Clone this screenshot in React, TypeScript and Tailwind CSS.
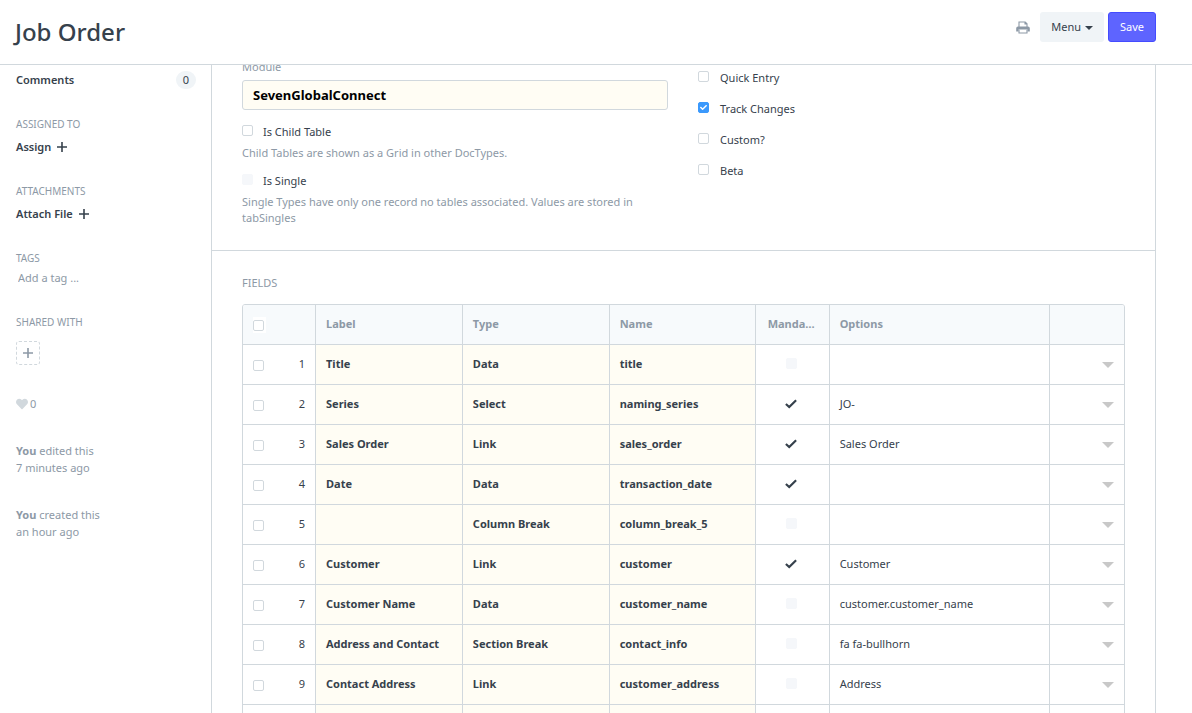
import React from "react";
import { FaCheck, FaHeart } from "react-icons/fa";

type Field = {
  label: string;
  type: string;
  name: string;
  mandatory: boolean;
  options: string;
};

const fields: Field[] = [
  { label: "Title", type: "Data", name: "title", mandatory: false, options: "" },
  { label: "Series", type: "Select", name: "naming_series", mandatory: true, options: "JO-" },
  { label: "Sales Order", type: "Link", name: "sales_order", mandatory: true, options: "Sales Order" },
  { label: "Date", type: "Data", name: "transaction_date", mandatory: true, options: "" },
  { label: "", type: "Column Break", name: "column_break_5", mandatory: false, options: "" },
  { label: "Customer", type: "Link", name: "customer", mandatory: true, options: "Customer" },
  { label: "Customer Name", type: "Data", name: "customer_name", mandatory: false, options: "customer.customer_name" },
  { label: "Address and Contact", type: "Section Break", name: "contact_info", mandatory: false, options: "fa fa-bullhorn" },
  { label: "Contact Address", type: "Link", name: "customer_address", mandatory: false, options: "Address" },
];

const flags = [
  { id: "quick-entry", label: "Quick Entry", checked: false },
  { id: "track-changes", label: "Track Changes", checked: true },
  { id: "custom", label: "Custom?", checked: false },
  { id: "beta", label: "Beta", checked: false },
];

function Tick({ className }: { className: string }) {
  return (
    <svg viewBox="0 0 12 10" className={className} fill="none" stroke="currentColor" strokeWidth="2.2" aria-hidden="true">
      <path d="M0.9 5 L4.2 8 L11.1 1.2" />
    </svg>
  );
}

function Plus({ className }: { className: string }) {
  return (
    <svg viewBox="0 0 10 10" className={className} fill="none" stroke="currentColor" aria-hidden="true">
      <path d="M5 0 V10 M0 5 H10" strokeWidth="1.6" />
    </svg>
  );
}

function Checkbox({ id, label, checked, disabled }: { id: string; label?: string; checked?: boolean; disabled?: boolean }) {
  return (
    <span className="relative block size-[11px] shrink-0">
      <input
        id={id}
        type="checkbox"
        aria-label={label}
        defaultChecked={checked}
        disabled={disabled}
        className="peer block size-[11px] appearance-none rounded-[2px] border border-[#d1d8dd] bg-white checked:border-[#3b99fc] checked:bg-[#3b99fc] disabled:border-[#f5f7fa] disabled:bg-[#f5f7fa]"
      />
      <FaCheck className="pointer-events-none absolute top-0.5 left-0.5 hidden size-[7px] text-white peer-checked:block" />
    </span>
  );
}

function SideHeading({ children }: { children: React.ReactNode }) {
  return <h2 className="text-[10px] leading-4 text-[#8d99a6] uppercase">{children}</h2>;
}

export default function App() {
  return (
    <div className="flex h-screen flex-col overflow-hidden bg-white font-['Noto_Sans','Open_Sans',sans-serif] text-[11px] leading-4 text-[#36414c]">
      <header className="z-10 flex h-[65px] shrink-0 items-start justify-between border-b border-[#d1d8dd] bg-white pr-9 pl-[15px]">
        <h1 className="pt-4 text-2xl font-medium">Job Order</h1>
        <div className="flex items-center pt-3">
          <button type="button" aria-label="Print" className="mr-2.5 text-[#8d99a6]">
            <svg viewBox="0 0 14 13" className="h-[13px] w-3.5" fill="none" stroke="currentColor" aria-hidden="true">
              <path d="M3 6 V1 H9.2 L11 2.8 V6 M9 1 V3 H11" strokeWidth="1.1" />
              <path d="M2 5.5 H12 Q13.8 5.5 13.8 7.3 V10.5 H11.5 V8.5 H2.5 V10.5 H0.2 V7.3 Q0.2 5.5 2 5.5 Z" fill="currentColor" stroke="none" />
              <path d="M3 8.8 V12 H11 V8.8" strokeWidth="1.1" />
            </svg>
          </button>
          <button type="button" className="flex h-[30px] items-center gap-1 rounded-[3px] bg-[#f0f4f7] px-[11px]">
            Menu
            <svg viewBox="0 0 8 4" className="mt-0.5 h-1 w-2" fill="currentColor" aria-hidden="true">
              <path d="M0 0 H8 L4 4 Z" />
            </svg>
          </button>
          <button type="button" className="ml-1 h-[30px] rounded-[3px] border border-[#444bff] bg-[#5e64ff] px-[11px] text-white">
            Save
          </button>
        </div>
      </header>

      <div className="flex min-h-0 grow pr-9">
        <aside className="w-[211px] shrink-0 pt-1.5 pr-[15px] pl-4">
          <div className="flex items-center justify-between font-semibold">
            <a href="#comments">Comments</a>
            <span className="rounded-full bg-[#f0f4f7] px-[7px] py-px font-normal">0</span>
          </div>

          <section className="mt-[27px]">
            <SideHeading>Assigned to</SideHeading>
            <button type="button" className="mt-[7px] flex items-center gap-1.5 font-semibold">
              Assign <Plus className="size-2.5" />
            </button>
          </section>

          <section className="mt-7">
            <SideHeading>Attachments</SideHeading>
            <button type="button" className="mt-[7px] flex items-center gap-1.5 font-semibold">
              Attach File <Plus className="size-2.5" />
            </button>
          </section>

          <section className="mt-7">
            <SideHeading>Tags</SideHeading>
            <input
              type="text"
              aria-label="Add a tag"
              placeholder="Add a tag ..."
              className="mt-1 block h-4 w-full px-0.5 outline-none placeholder:text-[#8d99a6]"
            />
          </section>

          <section className="mt-7">
            <SideHeading>Shared with</SideHeading>
            <button
              type="button"
              aria-label="Share"
              className="mt-[11px] flex size-6 items-center justify-center rounded-[3px] border border-dashed border-[#d1d8dd] text-[#8d99a6]"
            >
              <Plus className="size-2.5" />
            </button>
          </section>

          <button type="button" className="mt-[31px] flex items-center gap-0.5 text-[#8d99a6]">
            <FaHeart className="size-3 text-[#d1d8dd]" />0
          </button>

          <p className="mt-[30px] leading-[17px] text-[#8d99a6]">
            <b className="font-bold">You</b> edited this
            <br />7 minutes ago
          </p>
          <p className="mt-[30px] leading-[17px] text-[#8d99a6]">
            <b className="font-bold">You</b> created this
            <br />
            an hour ago
          </p>
        </aside>

        <main className="min-w-0 grow border-x border-[#d1d8dd]">
          <section className="grid grid-cols-2 gap-[30px] border-b border-[#d1d8dd] pr-[31px] pb-6 pl-[30px]">
            <div className="-mt-1.5">
              <label htmlFor="module" className="block text-[#8d99a6]">
                Module
              </label>
              <input
                id="module"
                type="text"
                defaultValue="SevenGlobalConnect"
                className="mt-[5px] block h-[30px] w-full rounded-[3px] border border-[#d1d8dd] bg-[#fffdf4] px-2.5 text-[13px] font-bold text-black outline-none"
              />
              <div className="mt-3.5 flex gap-2.5">
                <div className="pt-px">
                  <Checkbox id="is-child-table" />
                </div>
                <label htmlFor="is-child-table">Is Child Table</label>
              </div>
              <p className="mt-[5px] text-[#8d99a6]">Child Tables are shown as a Grid in other DocTypes.</p>
              <div className="mt-3 flex gap-2.5">
                <div className="pt-px">
                  <Checkbox id="is-single" disabled />
                </div>
                <label htmlFor="is-single">Is Single</label>
              </div>
              <p className="mt-[5px] text-[#8d99a6]">
                Single Types have only one record no tables associated. Values are stored in tabSingles
              </p>
            </div>
            <div className="flex flex-col gap-[15px] pt-[5px]">
              {flags.map((f) => (
                <div key={f.id} className="flex gap-[11px]">
                  <div className="pt-px">
                    <Checkbox id={f.id} checked={f.checked} />
                  </div>
                  <label htmlFor={f.id}>{f.label}</label>
                </div>
              ))}
            </div>
          </section>

          <section className="px-[30px] pt-6">
            <h2 className="text-[#8d99a6] uppercase">Fields</h2>
            <div className="mt-[13px] overflow-hidden rounded-[3px] border border-[#d1d8dd]">
              <table className="w-full table-fixed border-separate border-spacing-0 text-left [&_td]:border-b [&_td]:border-[#d1d8dd] [&_td]:px-2.5 [&_td]:pb-0.5 [&_td:not(:last-child)]:border-r [&_th]:border-b [&_th]:border-[#d1d8dd] [&_th]:px-2.5 [&_th]:pb-0.5 [&_th:not(:last-child)]:border-r">
                <colgroup>
                  <col className="w-[73px]" />
                  <col className="w-1/6" />
                  <col className="w-1/6" />
                  <col className="w-[146px]" />
                  <col className="w-[74px]" />
                  <col className="w-1/4" />
                  <col />
                </colgroup>
                <thead>
                  <tr className="h-10 bg-[#f7fafc] text-[#8d99a6]">
                    <th>
                      <div className="mt-[3px] flex h-4 w-[13px] items-center bg-white">
                        <Checkbox id="select-all" label="Select all rows" />
                      </div>
                    </th>
                    <th className="font-bold">Label</th>
                    <th className="font-bold">Type</th>
                    <th className="font-bold">Name</th>
                    <th className="font-bold">
                      <div className="truncate px-0.5">Mandatory</div>
                    </th>
                    <th className="font-bold">Options</th>
                    <th />
                  </tr>
                </thead>
                <tbody>
                  {fields.map((f, i) => (
                    <tr key={f.name} className="h-10">
                      <td>
                        <div className="flex items-center justify-between">
                          <div className="pt-[3px]">
                            <Checkbox id={`row-${i + 1}`} label={`Select row ${i + 1}`} />
                          </div>
                          {i + 1}
                        </div>
                      </td>
                      <td className="bg-[#fffdf4] font-bold">{f.label}</td>
                      <td className="bg-[#fffdf4] font-bold">{f.type}</td>
                      <td className="bg-[#fffdf4] font-bold">{f.name}</td>
                      <td>
                        <div className="flex justify-center pr-0.5">
                          {f.mandatory ? (
                            <Tick className="h-2.5 w-3" />
                          ) : (
                            <Checkbox id={`mandatory-${i + 1}`} label={`${f.name} mandatory`} disabled />
                          )}
                        </div>
                      </td>
                      <td>{f.options}</td>
                      <td>
                        <button type="button" aria-label={`Open row ${i + 1}`} className="ml-auto block pt-0.5 text-[#c8c8c8]">
                          <svg viewBox="0 0 12 6" className="h-1.5 w-3" fill="currentColor" aria-hidden="true">
                            <path d="M0 0 H12 L6 6 Z" />
                          </svg>
                        </button>
                      </td>
                    </tr>
                  ))}
                  <tr className="h-10">
                    <td />
                    <td className="bg-[#fffdf4]" />
                    <td className="bg-[#fffdf4]" />
                    <td className="bg-[#fffdf4]" />
                    <td />
                    <td />
                    <td />
                  </tr>
                </tbody>
              </table>
            </div>
          </section>
        </main>
      </div>
    </div>
  );
}
